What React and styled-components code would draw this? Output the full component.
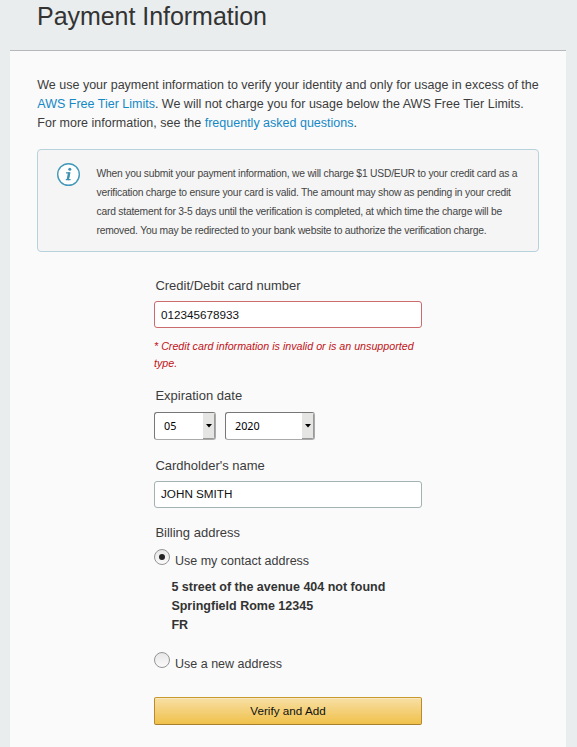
import React from 'react';
import styled, { createGlobalStyle } from 'styled-components';

const GlobalStyle = createGlobalStyle`
  * { box-sizing: border-box; }
  body {
    margin: 0;
    background: #e9eded;
    color: #3c3c3c;
    font: 12.5px/19px "Liberation Sans", Arial, sans-serif;
  }
`;

const Page = styled.div`
  width: 577px;
  height: 747px;
  overflow: hidden;
  padding: 0 11px 0 10px;
`;

const Header = styled.header`
  height: 50px;
  padding: 1px 0 0 27px;
`;

const Title = styled.h1`
  margin: 0;
  font-size: 25px;
  line-height: 30px;
  font-weight: 400;
  letter-spacing: -0.04px;
  color: #333;
`;

const Panel = styled.main`
  height: 697px;
  padding: 25px 27px 0;
  background: #fafafa;
  border-top: 1px solid #b5b9b9;
`;

const Line = styled.span`
  display: block;
  white-space: nowrap;
`;

const Intro = styled.p`
  margin: 0 0 16px;
  padding-left: 0.3px;
`;

const Link = styled.a`
  color: #1588c6;
  text-decoration: none;
`;

const Notice = styled.section`
  display: flex;
  width: 502px;
  height: 103px;
  padding: 13px 0 0 19px;
  background: #f5f5f5;
  border: 1px solid #b7d2dd;
  border-radius: 4px;
`;

const InfoIcon = styled.svg`
  flex: none;
  width: 24px;
  height: 24px;
  margin-right: 16px;
`;

const NoticeText = styled.p`
  margin: 1px 0 0 -0.5px;
  font-size: 10.3px;
  letter-spacing: -0.21px;
  color: #444;
`;

const Form = styled.form`
  width: 268px;
  margin: 24px 0 0 117px;
`;

const Label = styled.label`
  display: block;
  height: 19px;
  margin-bottom: ${(p) => p.$gap}px;
  padding-left: 1.4px;
  font-size: 13px;
  white-space: nowrap;
`;

const Input = styled.input`
  display: block;
  width: 268px;
  height: 27px;
  padding: 0 6px ${(p) => (p.$invalid ? 0 : 2)}px;
  border: 1px solid ${(p) => (p.$invalid ? '#cc6b6b' : '#a3b3b3')};
  border-radius: 3px;
  outline: none;
  background: #fff;
  color: #111;
  font: 11.7px "Liberation Sans", Arial, sans-serif;
`;

const ErrorText = styled.p`
  margin: 10px 0 14px;
  color: #c11217;
  font-size: 10.7px;
  line-height: 17px;
  font-style: italic;
`;

const Selects = styled.div`
  display: flex;
  gap: 9px;
  margin-bottom: 16px;
`;

const SelectBox = styled.div`
  display: flex;
  width: ${(p) => p.$width}px;
  height: 28px;
  border: 1px solid #777;
  border-right-color: #aaa;
  border-bottom-color: #aaa;
  border-radius: 3px;
  overflow: hidden;
  background: #fff;
`;

const SelectValue = styled.span`
  flex: 1;
  padding-left: 9px;
  color: #000;
  font: 10.8px/26px "Noto Sans", sans-serif;
`;

const SelectArrow = styled.span`
  display: flex;
  align-items: center;
  justify-content: center;
  width: 12px;
  background: #e5e5e4;
  border-right: 1px solid #999;
  border-bottom: 1px solid #999;
`;

const Billing = styled.fieldset`
  min-width: 0;
  margin: 15px 0 0;
  padding: 0;
  border: 0;
`;

const Option = styled.label`
  display: flex;
  height: 19px;
  white-space: nowrap;
`;

const Radio = styled.span`
  flex: none;
  display: flex;
  align-items: center;
  justify-content: center;
  width: 16px;
  height: 16px;
  margin: -3px 5px 0 0;
  border: 1px solid #949494;
  border-radius: 50%;
  background: linear-gradient(#e7e7e7, #fafafa);
`;

const Dot = styled.span`
  width: 6px;
  height: 6px;
  border-radius: 50%;
  background: #222;
`;

const Address = styled.address`
  margin: 7px 0 20px 17.4px;
  font-style: normal;
  font-weight: 700;
  color: #333;
`;

const Submit = styled.button`
  display: block;
  width: 268px;
  height: 28px;
  margin-top: 23px;
  padding: 0 0 2px;
  border: 1px solid;
  border-color: #c7992f #b98b2c #a9802e;
  border-radius: 2px;
  background: linear-gradient(#f7dfa5, #f0c14b);
  box-shadow: inset 0 1px 0 #f9e8bf;
  color: #111;
  font: 11.7px "Liberation Sans", Arial, sans-serif;
`;

function Select({ width, children }) {
  return (
    <SelectBox $width={width}>
      <SelectValue>{children}</SelectValue>
      <SelectArrow>
        <svg width="6" height="4" viewBox="0 0 6 4">
          <path d="M0 0h6L3 3.5z" fill="#000" />
        </svg>
      </SelectArrow>
    </SelectBox>
  );
}

export default function App() {
  return (
    <Page>
      <GlobalStyle />
      <Header>
        <Title>Payment Information</Title>
      </Header>
      <Panel>
        <Intro>
          <Line>We use your payment information to verify your identity and only for usage in excess of the</Line>
          <Line><Link>AWS Free Tier Limits</Link>. We will not charge you for usage below the AWS Free Tier Limits.</Line>
          <Line>For more information, see the <Link>frequently asked questions</Link>.</Line>
        </Intro>
        <Notice>
          <InfoIcon viewBox="0 0 24 24">
            <circle cx="11.5" cy="11.5" r="10.8" fill="#fff" stroke="#4298b9" strokeWidth="1.4" />
            <circle cx="12.8" cy="6.3" r="1.5" fill="#3d91b1" />
            <path d="M9 9.9H12.6L11 16.6H13.6M8.8 16.6H11.2" fill="none" stroke="#3d91b1" strokeWidth="1.3" />
            <path d="M12.2 9.5L10.7 17" stroke="#3d91b1" strokeWidth="2.3" />
          </InfoIcon>
          <NoticeText>
            <Line>When you submit your payment information, we will charge $1 USD/EUR to your credit card as a</Line>
            <Line>verification charge to ensure your card is valid. The amount may show as pending in your credit</Line>
            <Line>card statement for 3-5 days until the verification is completed, at which time the charge will be</Line>
            <Line>removed. You may be redirected to your bank website to authorize the verification charge.</Line>
          </NoticeText>
        </Notice>
        <Form>
          <Label $gap={6}>Credit/Debit card number</Label>
          <Input $invalid readOnly value="012345678933" />
          <ErrorText>
            <Line>* Credit card information is invalid or is an unsupported</Line>
            <Line>type.</Line>
          </ErrorText>
          <Label $gap={7}>Expiration date</Label>
          <Selects>
            <Select width={62}>05</Select>
            <Select width={90}>2020</Select>
          </Selects>
          <Label $gap={6}>Cardholder's name</Label>
          <Input readOnly value="JOHN SMITH" />
          <Billing>
            <Label as="div" $gap={10}>Billing address</Label>
            <Option><Radio><Dot /></Radio>Use my contact address</Option>
            <Address>
              <Line>5 street of the avenue 404 not found</Line>
              <Line>Springfield Rome 12345</Line>
              <Line>FR</Line>
            </Address>
            <Option><Radio />Use a new address</Option>
          </Billing>
          <Submit type="button">Verify and Add</Submit>
        </Form>
      </Panel>
    </Page>
  );
}
